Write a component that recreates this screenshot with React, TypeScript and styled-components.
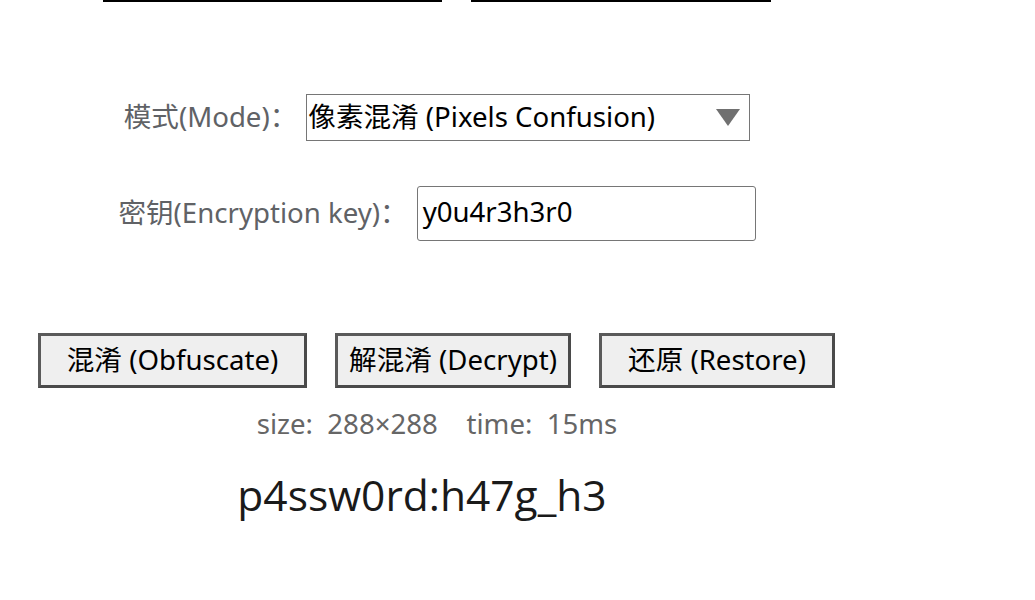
import React from "react";
import styled, { createGlobalStyle } from "styled-components";

const Global = createGlobalStyle`
  html, body { margin: 0; padding: 0; background: #fff; }
  body { font-family: "Noto Sans", "Noto Sans CJK SC", sans-serif; }
`;

const Page = styled.div`
  width: 874px;
  display: flex;
  flex-direction: column;
  align-items: center;
`;

const TopRow = styled.div`
  align-self: stretch;
  display: flex;
  padding-left: 103px;
  gap: 29px;
`;

const ImageEdge = styled.div<{ $w: number }>`
  width: ${(p) => p.$w}px;
  height: 2px;
  background: #000;
`;

const FormRow = styled.div<{ $mt: number }>`
  display: flex;
  align-items: center;
  margin-top: ${(p) => p.$mt}px;
`;

const Label = styled.span`
  font-size: 27.6px;
  color: #606266;
  margin-right: 9px;
  padding-bottom: 6px;
`;

const SelectBox = styled.div`
  position: relative;
  width: 444px;
  height: 47px;
  box-sizing: border-box;
  border: 1px solid #767676;
  display: flex;
  align-items: center;
  padding: 0 0 5px 1px;
  font-size: 27.6px;
  color: #000;
`;

const Arrow = styled.svg`
  position: absolute;
  right: 9px;
  top: 14px;
`;

const KeyInput = styled.div`
  width: 339px;
  height: 55px;
  box-sizing: border-box;
  border: 1px solid #767676;
  border-radius: 3px;
  display: flex;
  align-items: center;
  padding: 0 0 5px 5px;
  font-size: 27.6px;
  color: #000;
`;

const ButtonRow = styled.div`
  display: flex;
  gap: 28px;
  margin-top: 92px;
  margin-right: 1px;
`;

const Button = styled.button<{ $w: number }>`
  width: ${(p) => p.$w}px;
  height: 55px;
  box-sizing: border-box;
  border: 3px solid #4a4a4a;
  border-top-color: #5a5a5a;
  border-left-color: #5a5a5a;
  background: #efefef;
  font-family: "Noto Sans", "Noto Sans CJK SC", sans-serif;
  font-size: 27.6px;
  color: #000;
  padding: 0 0 5px 0;
`;

const Status = styled.div`
  margin-top: 16px;
  font-size: 27.6px;
  color: #666;
  white-space: pre;
`;

const Result = styled.div`
  margin-top: 24px;
  margin-right: 30px;
  font-family: "Open Sans", "Noto Sans", sans-serif;
  font-size: 42.5px;
  color: #1a1a1a;
`;

export default function App() {
  return (
    <>
      <Global />
      <Page>
        <TopRow>
          <ImageEdge $w={339} />
          <ImageEdge $w={300} />
        </TopRow>
        <FormRow $mt={92}>
          <Label>模式(Mode)：</Label>
          <SelectBox>
            像素混淆 (Pixels Confusion)
            <Arrow width="24" height="17" viewBox="0 0 24 17">
              <polygon points="0,0 24,0 12,17" fill="#707070" />
            </Arrow>
          </SelectBox>
        </FormRow>
        <FormRow $mt={45}>
          <Label>密钥(Encryption key)：</Label>
          <KeyInput>y0u4r3h3r0</KeyInput>
        </FormRow>
        <ButtonRow>
          <Button $w={269}>混淆 (Obfuscate)</Button>
          <Button $w={236}>解混淆 (Decrypt)</Button>
          <Button $w={236}>还原 (Restore)</Button>
        </ButtonRow>
        <Status>{"size:  288×288    time:  15ms"}</Status>
        <Result>p4ssw0rd:h47g_h3</Result>
      </Page>
    </>
  );
}
